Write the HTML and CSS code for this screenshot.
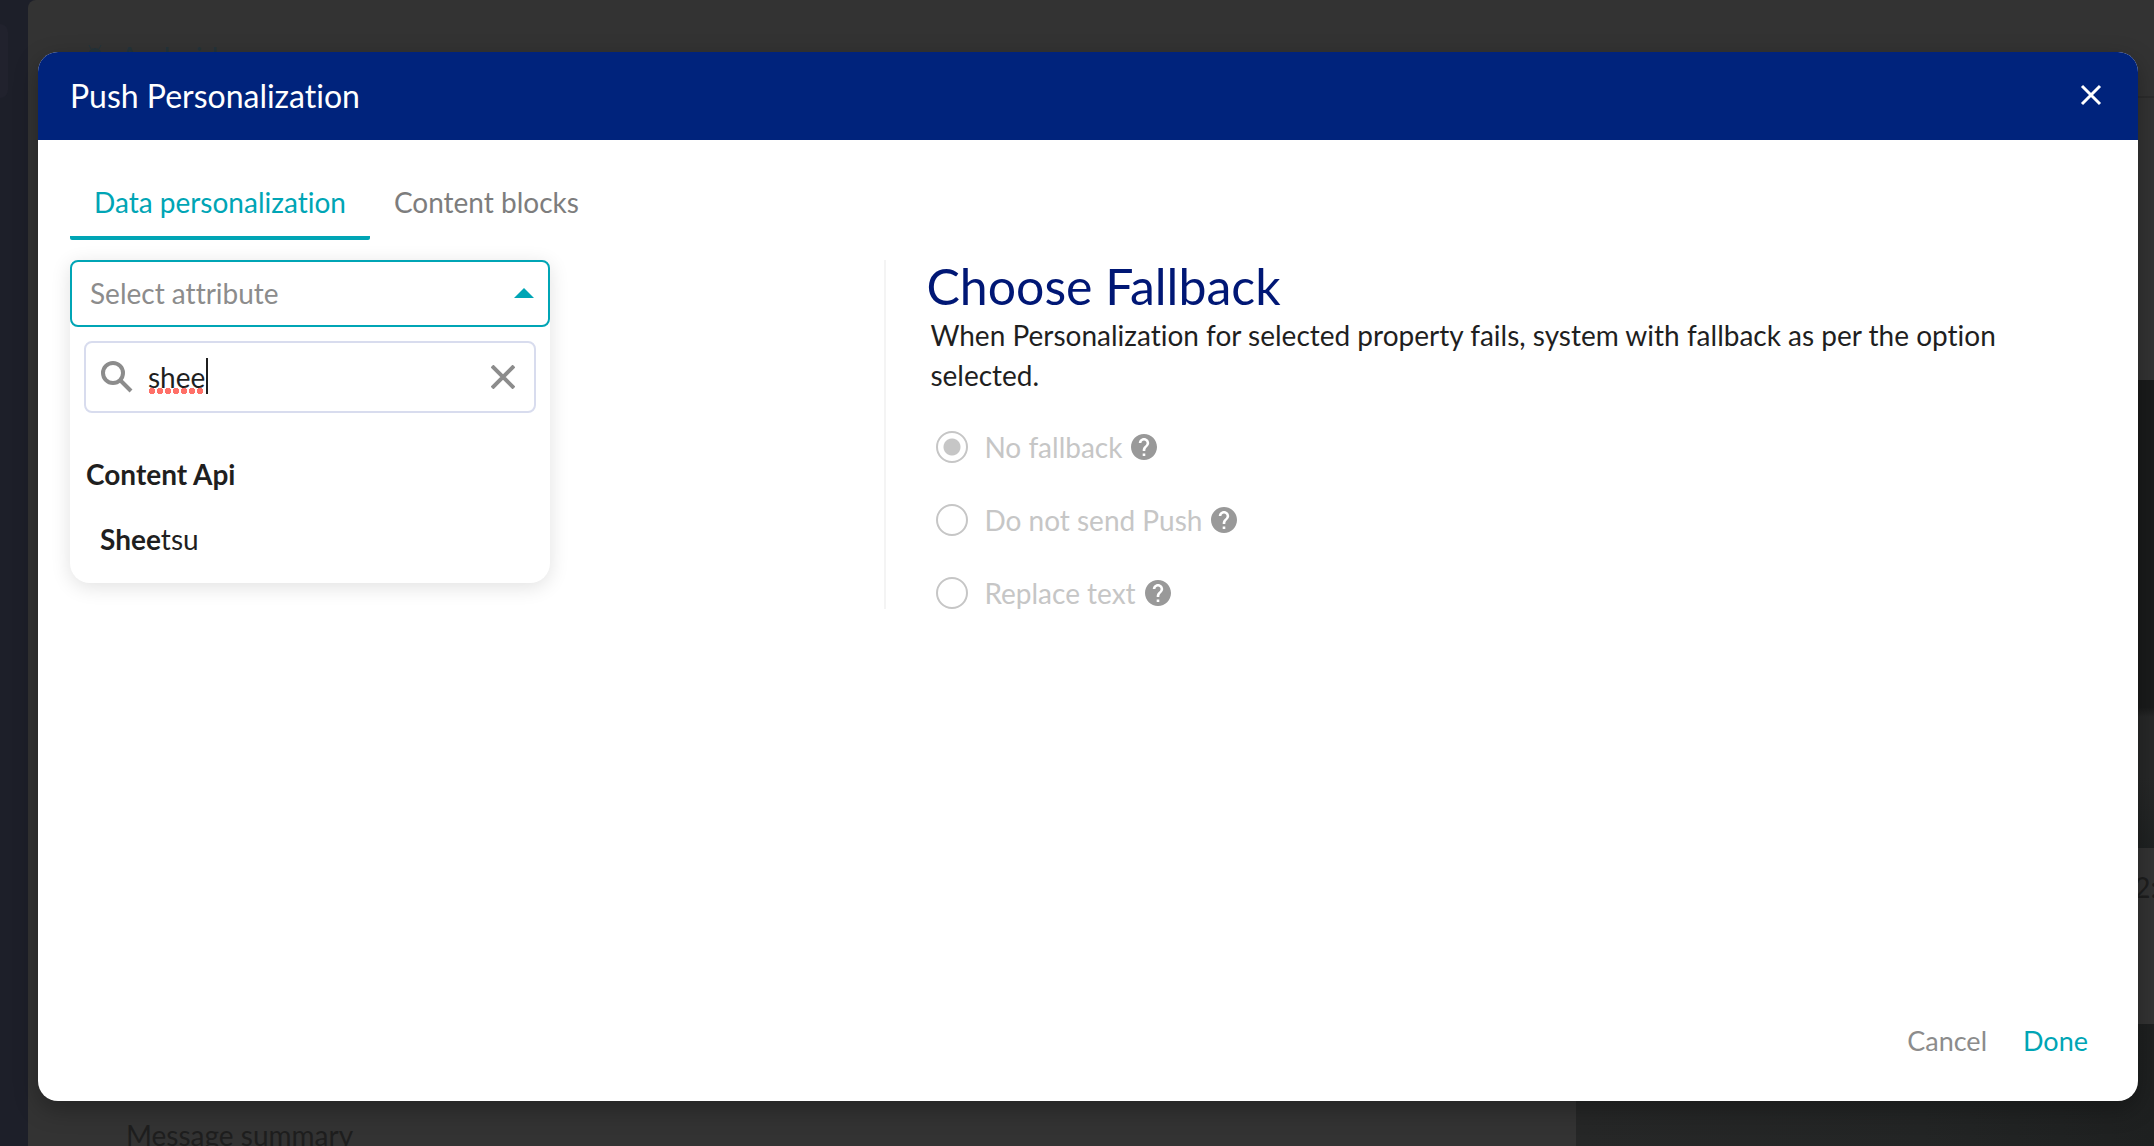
FILE: index.html
```html
<!DOCTYPE html>
<html lang="en">
<head>
  <meta charset="UTF-8">
  <meta name="viewport" content="width=device-width, initial-scale=1.0">
  <title>Push Personalization</title>
  <link rel="stylesheet" href="styles.css">
</head>
<body>

  <!-- Campaign page behind the dialog -->
  <div class="page" aria-hidden="true">
    <div class="sidebar">
      <div class="sidebar-item"></div>
    </div>
    <div class="editor">
      <div class="platform">
        <svg class="android-icon" viewBox="0 0 14 26"><path d="M0 12a7 8 0 0 1 14 0v12H0z"/><path d="M3 5L1 1M11 5l2-4" stroke="currentColor"/><path class="android-eyes" d="M4 8h1v1H4zM9 8h1v1H9z"/></svg>
        <span>Android</span>
      </div>
      <div class="summary">Message summary</div>
    </div>
    <div class="preview">
      <div class="preview-header"></div>
      <div class="preview-top"></div>
      <div class="preview-image"></div>
      <div class="preview-time">12:</div>
      <div class="preview-photo"></div>
    </div>
  </div>

  <div class="overlay">
    <div class="modal" role="dialog" aria-labelledby="modal-title">
      <header class="modal-header">
        <h1 class="modal-title" id="modal-title">Push Personalization</h1>
        <button type="button" class="close-button" aria-label="Close">
          <svg class="close-icon" viewBox="0 0 24 24"><path d="M3 3l18 18M21 3L3 21"/></svg>
        </button>
      </header>

      <div class="modal-body">
        <nav class="tabs">
          <button type="button" class="tab active">Data personalization</button>
          <button type="button" class="tab">Content blocks</button>
        </nav>

        <div class="columns">
          <!-- Attribute picker -->
          <section class="attribute-column">
            <div class="dropdown">
              <button type="button" class="dropdown-toggle" aria-expanded="true">
                <span>Select attribute</span>
                <svg class="caret" viewBox="0 0 20 10"><path d="M0 10L10 0l10 10z"/></svg>
              </button>
              <div class="dropdown-menu">
                <div class="search-box">
                  <svg class="search-icon" viewBox="0 0 32 32"><circle cx="12" cy="12" r="10"/><path d="M19 19l11 11"/></svg>
                  <div class="search-field">
                    <input type="text" class="search-input" id="search" aria-label="Search attribute" value="shee">
                    <span class="spell-mark"></span>
                    <span class="text-cursor"></span>
                  </div>
                  <button type="button" class="clear-button" aria-label="Clear">
                    <svg class="clear-icon" viewBox="0 0 24 24"><path d="M1 1l22 22M23 1L1 23"/></svg>
                  </button>
                </div>
                <h3 class="group-title">Content Api</h3>
                <button type="button" class="option"><b>Shee</b>tsu</button>
              </div>
            </div>
          </section>

          <!-- Fallback options -->
          <section class="fallback-column">
            <h2 class="fallback-title">Choose Fallback</h2>
            <p class="fallback-text">When Personalization for selected property fails, system with fallback as per the option selected.</p>

            <div class="radio-list">
              <div class="radio-row">
                <input type="radio" class="radio" name="fallback" id="no-fallback" checked disabled>
                <label for="no-fallback">No fallback</label>
                <svg class="help-icon" viewBox="0 0 24 24"><use href="#help"/></svg>
              </div>
              <div class="radio-row">
                <input type="radio" class="radio" name="fallback" id="no-push" disabled>
                <label for="no-push">Do not send Push</label>
                <svg class="help-icon" viewBox="0 0 24 24"><use href="#help"/></svg>
              </div>
              <div class="radio-row">
                <input type="radio" class="radio" name="fallback" id="replace" disabled>
                <label for="replace">Replace text</label>
                <svg class="help-icon" viewBox="0 0 24 24"><use href="#help"/></svg>
              </div>
            </div>
          </section>
        </div>
      </div>

      <footer class="modal-footer">
        <button type="button" class="footer-button">Cancel</button>
        <button type="button" class="footer-button primary">Done</button>
      </footer>
    </div>
  </div>

  <svg class="icon-defs" aria-hidden="true">
    <symbol id="help" viewBox="2 2 20 20">
      <path d="M12 2C6.480 2 2 6.480 2 12s4.480 10 10 10 10-4.480 10-10S17.520 2 12 2zm1 17h-2v-2h2v2zm2.070-7.750l-.9.920C13.450 12.900 13 13.500 13 15h-2v-.5c0-1.100.45-2.100 1.170-2.830l1.240-1.260c.370-.360.590-.860.590-1.410 0-1.100-.9-2-2-2s-2 .9-2 2H8c0-2.210 1.790-4 4-4s4 1.790 4 4c0 .880-.360 1.680-.930 2.250z"/>
    </symbol>
  </svg>

</body>
</html>
```
FILE: styles.css
```css
:root {
  --navy: #00237c;
  --heading: #001775;
  --teal: #00a5b5;
  --text: #1f1f1f;
  --muted: #7d7d7d;
  --disabled: #c6c6c6;
  --white: #ffffff;
}

* {
  box-sizing: border-box;
}

body {
  margin: 0;
  font-family: Lato, "Liberation Sans", sans-serif;
  font-size: 28px;
  font-variant-ligatures: none;
  color: var(--text);
  background-color: #333333;
}

button {
  padding: 0;
  border: none;
  background: none;
  font: inherit;
  font-variant-ligatures: none;
  color: inherit;
  cursor: pointer;
}

h1, h2, h3, p {
  margin: 0;
  font-weight: 400;
}

/* Page behind the dialog */
.page {
  display: flex;
  height: 100vh;
  overflow: hidden;
  background-color: #1d1f29;
}

.sidebar {
  width: 28px;
  padding-top: 24px;
}

.sidebar-item {
  width: 8px;
  height: 74px;
  border-radius: 0 8px 8px 0;
  background-color: #21222d;
}

.editor {
  flex: 1;
  display: flex;
  flex-direction: column;
  justify-content: space-between;
  padding: 40px 0 0 60px;
  border-radius: 8px 0 0 0;
  background-color: #333333;
  color: #1e1e1e;
}

.platform {
  display: flex;
  align-items: center;
  gap: 18px;
  color: #24333a;
}

.android-icon {
  width: 14px;
  height: 26px;
  fill: currentColor;
}

.android-eyes {
  fill: #333333;
}

.summary {
  height: 28px;
  padding-left: 38px;
  line-height: 34px;
}

.preview {
  display: flex;
  flex-direction: column;
  width: 578px;
  background-color: #333333;
}

.preview-header {
  height: 98px;
  border-bottom: 2px solid #2c2c2c;
}

.preview-top {
  height: 282px;
}

.preview-image {
  height: 468px;
  background: linear-gradient(#1a1b1b 70%, #272828 72%, #272828 85%, #1f2222);
}

.preview-time {
  height: 176px;
  padding: 22px 0 0 542px;
  overflow: hidden;
  color: #1e1e1e;
}

.preview-photo {
  flex: 1;
  background: linear-gradient(90deg, #262727, #232525 60%, #1e2020);
}

/* Dialog */
.overlay {
  position: absolute;
  inset: 0;
  display: flex;
  padding: 52px 16px 45px 38px;
}

.modal {
  flex: 1;
  display: flex;
  flex-direction: column;
  border-radius: 20px;
  background-color: var(--white);
  box-shadow: 0 8px 24px rgba(0, 0, 0, 0.3);
  overflow: hidden;
}

.modal-header {
  display: flex;
  justify-content: space-between;
  align-items: center;
  height: 88px;
  padding: 0 35px 2px 32px;
  background-color: var(--navy);
  color: var(--white);
}

.modal-title {
  font-size: 32px;
}

.close-button,
.clear-button {
  display: flex;
}

.close-icon {
  width: 24px;
  height: 24px;
  fill: none;
  stroke: var(--white);
  stroke-width: 3;
}

.modal-body {
  flex: 1;
  padding: 24px 32px;
}

.tabs {
  display: flex;
}

.tab {
  height: 76px;
  padding: 4px 24px 0;
  border-bottom: 4px solid transparent;
  border-radius: 2px;
  color: var(--muted);
}

.tab.active {
  border-color: var(--teal);
  color: var(--teal);
}

.columns {
  display: grid;
  grid-template-columns: 2fr 3fr;
  padding-top: 20px;
}

.dropdown {
  width: 480px;
  border-radius: 8px 8px 20px 20px;
  box-shadow: 0 4px 20px rgba(0, 0, 0, 0.12);
}

.dropdown-toggle {
  display: flex;
  justify-content: space-between;
  align-items: center;
  width: 100%;
  height: 67px;
  padding: 0 14px 2px 18px;
  border: 2px solid var(--teal);
  border-radius: 8px;
  color: #8c8c8c;
}

.caret {
  width: 20px;
  height: 10px;
  fill: var(--teal);
}

.dropdown-menu {
  padding: 14px 14px 16px;
}

.search-box {
  display: flex;
  align-items: center;
  gap: 15px;
  height: 72px;
  padding: 0 19px 0 15px;
  border: 2px solid #d8dcee;
  border-radius: 8px;
}

.search-icon {
  width: 32px;
  height: 32px;
  fill: none;
  stroke: #8c8c8c;
  stroke-width: 4;
}

.search-field {
  position: relative;
  flex: 1;
}

.search-input {
  width: 100%;
  padding: 0;
  border: none;
  outline: none;
  font: inherit;
  color: inherit;
}

.spell-mark {
  position: absolute;
  left: 0;
  bottom: 0;
  width: 56px;
  height: 6px;
  background: radial-gradient(circle, #ff7068 3px, transparent 3px) 0 0 / 8px 6px;
}

.text-cursor {
  position: absolute;
  left: 58px;
  bottom: 0;
  width: 2px;
  height: 36px;
  background-color: var(--text);
}

.clear-icon {
  width: 24px;
  height: 24px;
  fill: none;
  stroke: #8c8c8c;
  stroke-width: 4;
}

.group-title {
  padding: 44px 2px 0;
  font-size: 28px;
  line-height: 34px;
  font-weight: 700;
}

.option {
  display: block;
  padding: 32px 16px 12px;
  line-height: 32px;
}

.fallback-column {
  padding-left: 40px;
  border-left: 2px solid #f4f4f4;
}

.fallback-title {
  font-size: 50px;
  line-height: 52px;
  color: var(--heading);
}

.fallback-text {
  padding: 3px 100px 0 4px;
  line-height: 40px;
}

.radio-list {
  display: flex;
  flex-direction: column;
  gap: 40px;
  padding: 35px 10px 0;
}

.radio-row {
  display: flex;
  align-items: center;
  height: 33px;
  color: var(--disabled);
}

.radio {
  appearance: none;
  width: 32px;
  height: 32px;
  margin: 0 16px 0 0;
  border: 2px solid var(--disabled);
  border-radius: 50%;
}

.radio:checked {
  background: radial-gradient(circle, var(--disabled) 8px, transparent 9px);
}

.help-icon {
  width: 26px;
  height: 26px;
  margin-left: 9px;
  fill: #999999;
}

.modal-footer {
  display: flex;
  justify-content: flex-end;
  gap: 36px;
  padding: 0 50px 40px;
}

.footer-button {
  font-size: 27px;
  line-height: 40px;
  color: #8c8c8c;
}

.footer-button.primary {
  color: var(--teal);
}

.icon-defs {
  display: none;
}
```
